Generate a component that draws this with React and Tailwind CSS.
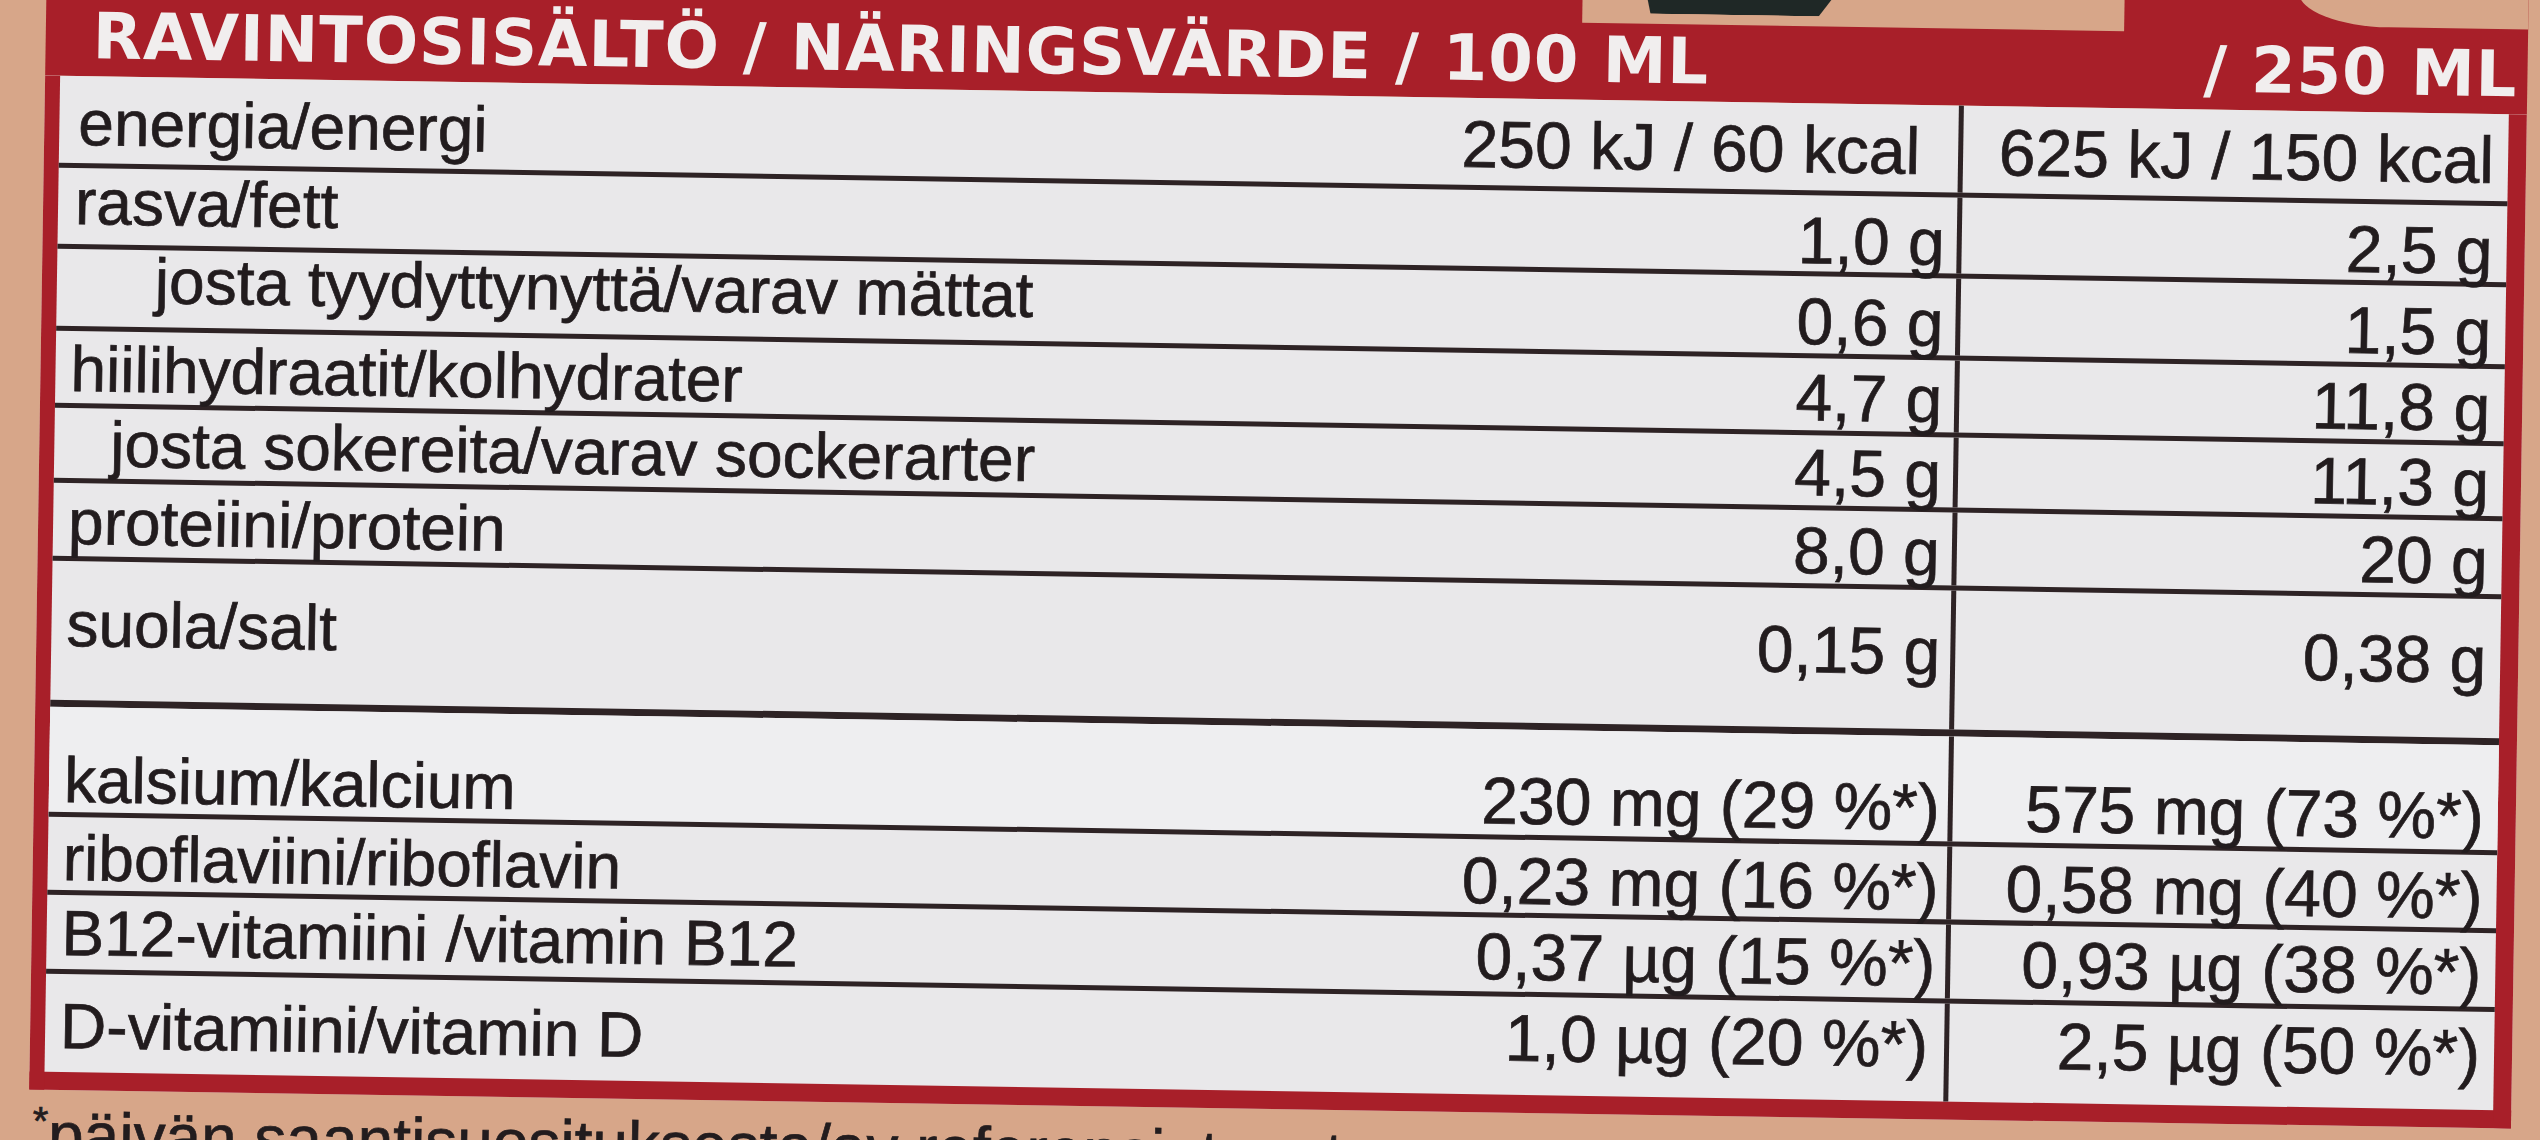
const rows = [
  { label: "energia/energi", a: "250 kJ / 60 kcal", b: "625 kJ / 150 kcal", row: "h-[92px] border-b-[5px]", left: "items-end pl-[19px] pr-[38px]", right: "items-end", lab: "mb-[8px]", val: "mb-[8px]" },
  { label: "rasva/fett", a: "1,0 g", b: "2,5 g", row: "h-[81px] border-b-[5px]", left: "items-end pl-[17px] pr-[12px]", right: "items-end", lab: "mb-[10px]", val: "mb-[-2px]" },
  { label: "josta tyydyttynyttä/varav mättat", a: "0,6 g", b: "1,5 g", row: "h-[82px] border-b-[5px]", left: "items-end pl-[98px] pr-[12px]", right: "items-end", lab: "mb-[14px]", val: "mb-[-1px]" },
  { label: "hiilihydraatit/kolhydrater", a: "4,7 g", b: "11,8 g", row: "h-[77px] border-b-[5px]", left: "items-end pl-[15px] pr-[12px]", right: "items-end", lab: "mb-[2px]", val: "mb-[0px]" },
  { label: "josta sokereita/varav sockerarter", a: "4,5 g", b: "11,3 g", row: "h-[75px] border-b-[5px]", left: "items-end pl-[56px] pr-[12px]", right: "items-end", lab: "mb-[2px]", val: "mb-[0px]" },
  { label: "proteiini/protein", a: "8,0 g", b: "20 g", row: "h-[78px] border-b-[5px]", left: "items-end pl-[15px] pr-[12px]", right: "items-end", lab: "mb-[2px]", val: "mb-[0px]" },
  { label: "suola/salt", a: "0,15 g", b: "0,38 g", row: "h-[146px] border-b-[7px]", left: "items-start pl-[15px] pr-[10px]", right: "items-start", lab: "mt-[31px]", val: "mt-[28px]" },
  { label: "kalsium/kalcium", a: "230 mg (29 %*)", b: "575 mg (73 %*)", row: "h-[110px] border-b-[5px] bg-[#eeeef0]", left: "items-end pl-[15px] pr-[8px]", right: "items-end", lab: "mb-[0px]", val: "mb-[1px]" },
  { label: "riboflaviini/riboflavin", a: "0,23 mg (16 %*)", b: "0,58 mg (40 %*)", row: "h-[78px] border-b-[5px]", left: "items-end pl-[15px] pr-[8px]", right: "items-end", lab: "mb-[0px]", val: "mb-[-1px]" },
  { label: "B12-vitamiini /vitamin B12", a: "0,37 µg (15 %*)", b: "0,93 µg (38 %*)", row: "h-[79px] border-b-[5px]", left: "items-end pl-[15px] pr-[10px]", right: "items-end", lab: "mb-[4px]", val: "mb-[2px]" },
  { label: "D-vitamiini/vitamin D", a: "1,0 µg (20 %*)", b: "2,5 µg (50 %*)", row: "h-[98px]", left: "items-end pl-[15px] pr-[16px]", right: "items-end", lab: "mb-[14px]", val: "mb-[24px]" },
];

function Row({ r }) {
  return (
    <div className={`flex border-[#2e2325] ${r.row}`}>
      {/* label + per 100 ml */}
      <div className={`flex flex-1 justify-between ${r.left}`}>
        <span className={`text-[64px] leading-none whitespace-nowrap ${r.lab}`}>{r.label}</span>
        <span className={`text-[66px] leading-none whitespace-nowrap ${r.val}`}>{r.a}</span>
      </div>
      {/* per 250 ml */}
      <div className={`flex w-[550px] justify-end border-l-[5px] border-[#2e2325] pr-[14px] ${r.right}`}>
        <span className={`text-[66px] leading-none whitespace-nowrap ${r.val}`}>{r.b}</span>
      </div>
    </div>
  );
}

export default function App() {
  return (
    <div className="h-[1140px] w-[2540px] overflow-hidden bg-[#d7a689] font-['Liberation_Sans',Arial,sans-serif] text-[#221c1e] [-webkit-text-stroke:0.7px_#221c1e]">
      <div className="ml-[38px] mt-[-30px] w-[2482px] origin-[1243px_570px] rotate-[0.9deg]">
        {/* Header */}
        <div className="bg-[#a81f29]">
          <div className="flex h-[48px] items-start">
            <div className="flex-1" />
            <div className="flex h-[48px] w-[542px] items-start bg-[#d7a689] pl-[60px]">
              <div className="h-[38px] w-[205px] bg-[#1f2826] [clip-path:polygon(0_0,100%_0,86%_100%,4%_100%)]" />
            </div>
            <div className="w-[174px]" />
            <div className="h-[40px] w-[230px] rounded-bl-[90px_34px] bg-[#d7a689]" />
          </div>
          <div className="flex h-[77px] items-end justify-between pb-[8px] pl-[47px] pr-[10px] font-['DejaVu_Sans',sans-serif] text-[64px] font-bold leading-none tracking-[1px] text-[#f1eeee] [-webkit-text-stroke:0px]">
            <span className="whitespace-nowrap">RAVINTOSISÄLTÖ / NÄRINGSVÄRDE / 100 ML</span>
            <span className="whitespace-nowrap">/ 250 ML</span>
          </div>
        </div>

        {/* Table */}
        <div className="border-b-[18px] border-l-[15px] border-r-[18px] border-[#a81f29] bg-[#e9e8ea]">
          {rows.map((r) => (
            <Row key={r.label} r={r} />
          ))}
        </div>

        {/* Footnote */}
        <p className="whitespace-nowrap pl-[4px] pt-[11px] text-[64px] leading-none">
          <span className="align-super text-[40px]">*</span>päivän saantisuosituksesta/av referensintaget
        </p>
      </div>
    </div>
  );
}
